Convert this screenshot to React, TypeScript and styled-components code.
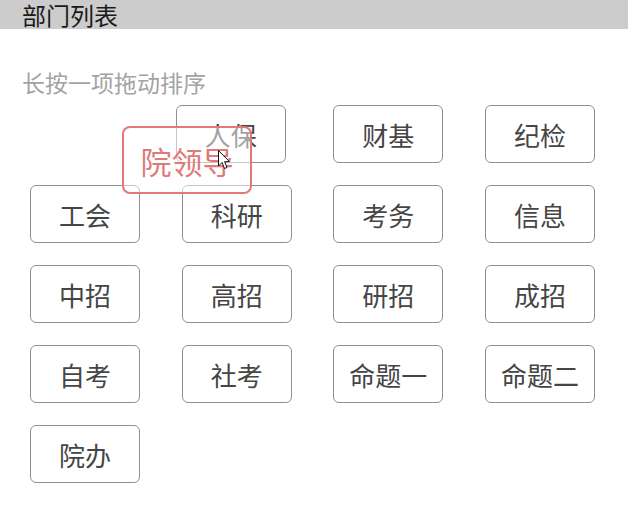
import React from "react";
import styled, { createGlobalStyle } from "styled-components";

const Global = createGlobalStyle`
  html, body { margin: 0; padding: 0; background: #ffffff; }
  body { font-family: "Noto Sans CJK SC", "Noto Sans", sans-serif; }
`;

const Page = styled.div`
  position: relative;
  width: 628px;
  height: 532px;
  overflow: hidden;
  background: #fff;
`;

const Header = styled.div`
  background: #cccccc;
  padding-left: 22px;
  font-size: 24px;
  line-height: 29px;
  color: #1a1a1a;
`;

const Hint = styled.div`
  margin-top: 38px;
  padding-left: 22px;
  line-height: 30px;
  font-size: 23px;
  color: #a3a3a3;
`;

const Grid = styled.div`
  margin-top: 8px;
  margin-left: 30px;
  width: 565px;
  display: grid;
  grid-template-columns: repeat(4, 110px);
  justify-content: space-between;
  grid-auto-rows: 58px;
  row-gap: 22px;
`;

const Cell = styled.div<{ $shift?: number; $empty?: boolean }>`
  box-sizing: border-box;
  border: 1px solid ${(p) => (p.$empty ? "transparent" : "#8f8f8f")};
  border-radius: 6px;
  display: flex;
  align-items: center;
  justify-content: center;
  font-size: 26px;
  color: #454545;
  transform: translateX(${(p) => p.$shift ?? 0}px);
  white-space: nowrap;
`;

const Dragged = styled.div`
  position: absolute;
  left: 122px;
  top: 126px;
  width: 130px;
  height: 68px;
  box-sizing: border-box;
  border: 2px solid #e07a7a;
  border-radius: 8px;
  background: rgba(255, 255, 255, 0.5);
  display: flex;
  align-items: center;
  justify-content: center;
  font-size: 31px;
  color: #e07a7a;
`;

const Cursor = styled.svg`
  position: absolute;
  left: 218px;
  top: 150px;
`;

const rows: string[] = [
  "",
  "人保",
  "财基",
  "纪检",
  "工会",
  "科研",
  "考务",
  "信息",
  "中招",
  "高招",
  "研招",
  "成招",
  "自考",
  "社考",
  "命题一",
  "命题二",
  "院办",
];

export default function App() {
  return (
    <Page>
      <Global />
      <Header>部门列表</Header>
      <Hint>长按一项拖动排序</Hint>
      <Grid>
        {rows.map((t, i) => (
          <Cell key={i} $empty={t === ""} $shift={t === "人保" ? -6 : 0}>
            {t}
          </Cell>
        ))}
      </Grid>
      <Dragged>院领导</Dragged>
      <Cursor width="13" height="20" viewBox="0 0 13 20">
        <path
          d="M0.5 0.5 L0.5 16 L4 12.5 L6.5 18.5 L9 17.5 L6.6 11.7 L11.5 11.7 Z"
          fill="#ffffff"
          stroke="#111111"
          strokeWidth="1"
          strokeLinejoin="round"
        />
      </Cursor>
    </Page>
  );
}
